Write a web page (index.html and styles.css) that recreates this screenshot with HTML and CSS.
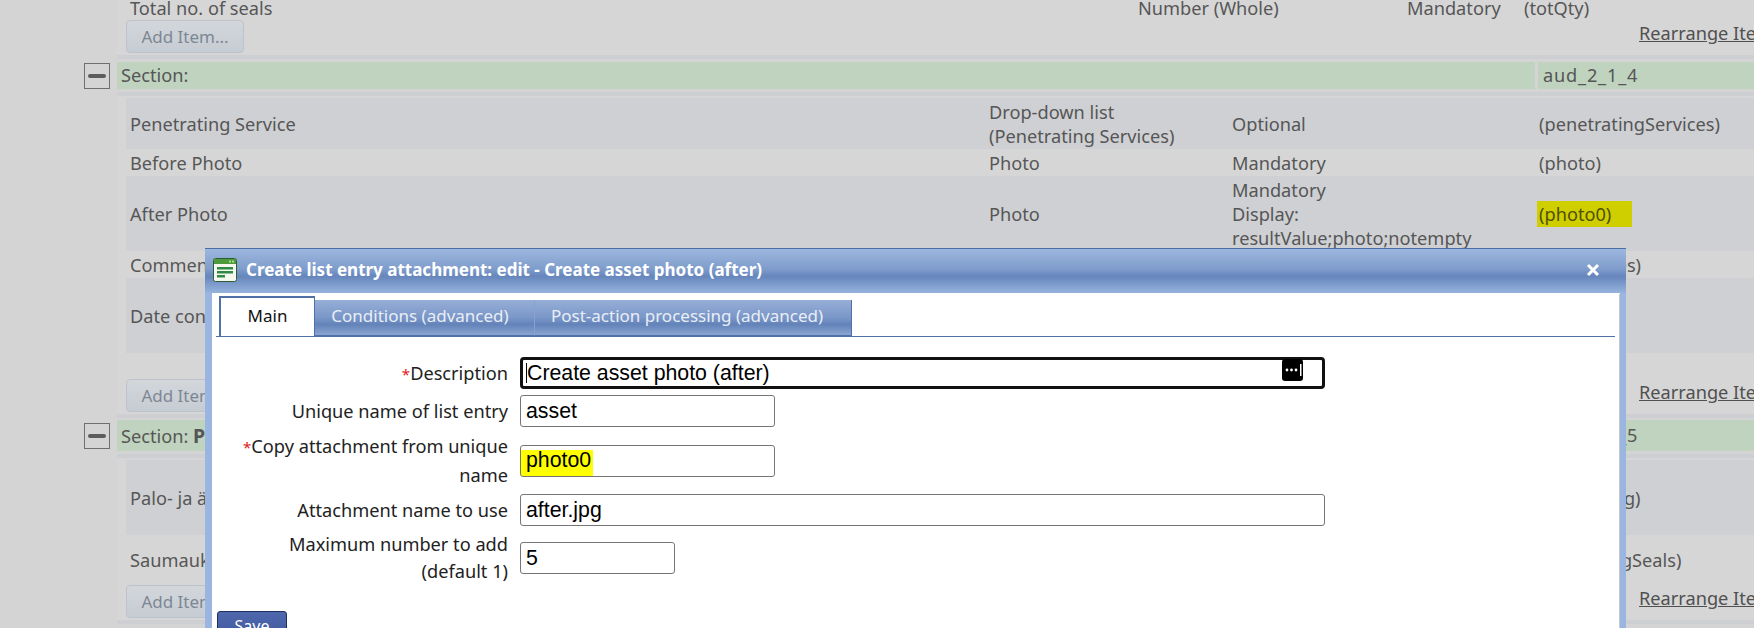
FILE: index.html
```html
<!DOCTYPE html>
<html>
<head>
  <title>Create list entry attachment</title>
  <link rel="stylesheet" href="styles.css">
</head>
<body>
  <div class="page">
    <div class="panel">
      <div class="row row-top">
        <span>Total no. of seals</span><span>Number (Whole)</span><span>Mandatory</span><span>(totQty)</span>
      </div>
      <div class="add-row add-top">
        <button class="add-btn">Add Item...</button>
        <a class="rearrange" href="#">Rearrange Items</a>
      </div>
    </div>

    <div class="section-head">
      <span class="toggle"></span>
      <div class="section-title">Section:</div>
      <div class="section-code">aud_2_1_4</div>
    </div>
    <div class="panel panel-rows">
      <div class="row dark h51">
        <span>Penetrating Service</span><span>Drop-down list<br>(Penetrating Services)</span><span>Optional</span><span>(penetratingServices)</span>
      </div>
      <div class="row h27">
        <span>Before Photo</span><span>Photo</span><span>Mandatory</span><span>(photo)</span>
      </div>
      <div class="row dark h75">
        <span>After Photo</span><span>Photo</span><span>Mandatory<br>Display:<br>resultValue;photo;notempty</span><span><span class="mark">(photo0)</span></span>
      </div>
      <div class="row h27">
        <span>Comments</span><span>Text</span><span>Optional</span><span>(afterNotes)</span>
      </div>
      <div class="row dark h75">
        <span>Date conducted</span><span>Date</span><span>Optional</span><span>(date)</span>
      </div>
      <div class="add-row add-second">
        <button class="add-btn">Add Item...</button>
        <a class="rearrange" href="#">Rearrange Items</a>
      </div>
    </div>

    <div class="section-head section-tall">
      <span class="toggle"></span>
      <div class="section-title">Section: <b>Palo- ja äänikatkot</b></div>
      <div class="section-code">aud_2_1_5</div>
    </div>
    <div class="panel panel-rows">
      <div class="row dark h75">
        <span>Palo- ja äänikatkot</span><span>Text</span><span>Optional</span><span>(fireSealing)</span>
      </div>
      <div class="row h50">
        <span>Saumaukset</span><span>Number</span><span>Optional</span><span>(remainingSeals)</span>
      </div>
      <div class="add-row">
        <button class="add-btn">Add Item...</button>
        <a class="rearrange" href="#">Rearrange Items</a>
      </div>
    </div>
  </div>

  <div class="dialog">
    <div class="dialog-title">
      <svg class="dialog-icon" width="24" height="24" viewBox="0 0 24 24">
        <rect x="0.5" y="0.5" width="23" height="23" rx="2" fill="#f4f8ee" stroke="#2f5d34"/>
        <rect x="1" y="1" width="22" height="5" fill="#4c9a3c"/>
        <rect x="16" y="2.5" width="2" height="2" fill="#a8d88e"/>
        <rect x="19" y="2.5" width="2" height="2" fill="#a8d88e"/>
        <rect x="4" y="9" width="16" height="2.5" fill="#2f8a45"/>
        <rect x="4" y="13" width="16" height="2.5" fill="#2f8a45"/>
        <rect x="4" y="17" width="8" height="2.5" fill="#2f8a45"/>
      </svg>
      <span class="dialog-name">Create list entry attachment: edit - Create asset photo (after)</span>
      <svg class="dialog-close" width="14" height="14" viewBox="0 0 14 14">
        <path d="M2 2L12 12M12 2L2 12" stroke="#fff" stroke-width="3"/>
      </svg>
    </div>
    <div class="dialog-body">
      <div class="tabs">
        <div class="tab tab-on">Main</div>
        <div class="tab tab-cond">Conditions (advanced)</div>
        <div class="tab tab-post">Post-action processing (advanced)</div>
      </div>
      <div class="form">
        <label class="flabel"><i>*</i>Description</label>
        <div class="focus-field">
          <input class="finput finput-focus" value="Create asset photo (after)">
          <span class="caret"></span>
          <svg class="pw-icon" width="21" height="22" viewBox="0 0 21 22">
            <rect width="21" height="22" rx="3" fill="#000"/>
            <circle cx="5" cy="11" r="1.4" fill="#fff"/>
            <circle cx="9.5" cy="11" r="1.4" fill="#fff"/>
            <circle cx="14" cy="11" r="1.4" fill="#fff"/>
            <rect x="18" y="5" width="1.5" height="12" fill="#fff"/>
          </svg>
        </div>

        <label class="flabel">Unique name of list entry</label>
        <input class="finput w255" value="asset">

        <label class="flabel flabel-copy"><i>*</i>Copy attachment from unique<br>name</label>
        <input class="finput w255 finput-mark" value="photo0">

        <label class="flabel">Attachment name to use</label>
        <input class="finput" value="after.jpg">

        <label class="flabel flabel-max">Maximum number to add<br>(default 1)</label>
        <input class="finput w155" value="5">
      </div>
      <button class="save-btn">Save</button>
    </div>
  </div>
</body>
</html>
```

FILE: styles.css
```css
html, body {
  margin: 0;
  height: 628px;
  overflow: hidden;
}
body {
  background-color: #d4d4d4;
  font-family: "Noto Sans", sans-serif;
  font-size: 18.2px;
  color: #565656;
  position: relative;
}
.page {
  padding-left: 117px;
}
.panel {
  background-color: #d6d6d6;
  padding: 0 0 0 9px;
  border-bottom: 4px solid #cecfd2;
  margin-bottom: 3px;
  height: 55px;
}
.panel-rows {
  border-top: 4px solid #cecfd2;
  margin-top: 3px;
  padding-top: 2px;
  height: auto;
  margin-bottom: 2px;
}
.row {
  display: grid;
  grid-template-columns: 859px 243px 307px 1fr;
  align-items: center;
  padding-left: 4px;
  line-height: 24px;
  white-space: nowrap;
}
.row-top {
  grid-template-columns: 1008px 269px 117px 1fr;
  height: 16px;
  line-height: 16px;
}
.dark {
  background-color: #cfd0d3;
}
.h27 { height: 27px; }
.h50 { height: 50px; }
.h51 { height: 51px; }
.h75 { height: 75px; }
.mark {
  display: inline-block;
  box-sizing: border-box;
  width: 95px;
  background-color: #cfcf00;
  color: #4f5000;
  margin-left: -2px;
  padding: 1px 0 1px 2px;
}
.add-row {
  display: flex;
  justify-content: space-between;
  height: 35px;
}
.add-top {
  margin-top: 4px;
}
.add-second {
  margin-top: 26px;
}
.add-btn {
  width: 118px;
  height: 33px;
  font-family: inherit;
  font-size: 17px;
  color: #7d8794;
  background: linear-gradient(#d3d7dc, #c6ccd3);
  border: 1px solid #bcc3cb;
  border-radius: 4px;
  padding: 0;
}
.rearrange {
  color: #505050;
  width: 115px;
  white-space: nowrap;
  line-height: 26px;
}
.section-head {
  display: flex;
  height: 27px;
  line-height: 27px;
  position: relative;
}
.section-tall {
  height: 31px;
  line-height: 31px;
}
.toggle {
  position: absolute;
  left: -33px;
  top: 1px;
  width: 24px;
  height: 24px;
  border: 1px solid #6f6f6f;
  display: flex;
  align-items: center;
  justify-content: center;
}
.section-tall .toggle {
  top: 3px;
}
.toggle::before {
  content: "";
  width: 18px;
  height: 4px;
  border-radius: 2px;
  background-color: #5c5c5c;
}
.section-title {
  width: 1418px;
  padding-left: 4px;
  box-sizing: border-box;
  background-color: #bfd3bf;
  white-space: nowrap;
  overflow: hidden;
}
.section-title b {
  font-size: 19.5px;
}
.section-code {
  flex: 1;
  margin-left: 3px;
  padding-left: 5px;
  letter-spacing: 0.8px;
  background-color: #bfd3bf;
}

/* dialog on top of the page */
.dialog {
  position: absolute;
  left: 205px;
  top: 248px;
  width: 1421px;
  height: 400px;
  box-sizing: border-box;
  border-top: 1px solid #4a6ea8;
  background-color: #9ab6e0;
  color: #222;
}
.dialog-title {
  height: 44px;
  box-sizing: border-box;
  display: flex;
  align-items: center;
  padding: 0 26px 2px 8px;
  background: linear-gradient(#9db7de, #7f9dcc 45%, #6686bc 62%, #97b3dd);
}
.dialog-icon {
  margin-right: 9px;
}
.dialog-name {
  flex: 1;
  font-size: 17px;
  font-weight: bold;
  color: #fff;
  margin-bottom: 2px;
}
.dialog-body {
  margin: 0 6px 0 7px;
  height: 355px;
  background-color: #fff;
  overflow: hidden;
  border-top: 1px solid #fff;
  box-shadow: inset -1px 0 0 #c8c8c8;
}
.tabs {
  display: flex;
  height: 40px;
  margin: 2px 5px 0 4px;
  border-bottom: 1px solid #4f71a6;
  align-items: flex-end;
  font-size: 17px;
}
.tab {
  height: 36px;
  line-height: 32px;
  text-align: center;
  box-sizing: border-box;
  color: #e9eef6;
  background: linear-gradient(#97aed7, #7a97c8 50%, #6383b9 70%, #8aa4d1);
  border-right: 1px solid #88a2cd;
  border-bottom: 1px solid #4f71a6;
}
.tab-on {
  width: 96px;
  height: 40px;
  line-height: 36px;
  margin-left: 3px;
  color: #111;
  background: #fff;
  border: 2px solid #4f71a6;
  border-bottom: 0;
  border-right-width: 1px;
}
.tab-cond { width: 220px; padding-right: 9px; }
.tab-post { width: 317px; padding-right: 12px; border-right-color: #4f71a6; }
.form {
  display: grid;
  grid-template-columns: 296px 1fr;
  column-gap: 12px;
  row-gap: 5px;
  align-items: center;
  margin-top: 20px;
  padding-right: 295px;
}
.flabel {
  text-align: right;
  line-height: 24px;
  color: #222;
}
.flabel i {
  color: #e02020;
  font-style: normal;
  font-size: 15px;
}
.flabel-copy { line-height: 28px; }
.flabel-max { line-height: 27px; }
.finput {
  box-sizing: border-box;
  width: 100%;
  height: 32px;
  border: 1px solid #767676;
  border-radius: 3px;
  padding: 0 5px;
  font-family: "Liberation Sans", sans-serif;
  font-size: 21.3px;
  color: #000;
  background-color: #fff;
  outline: none;
}
.w255 { width: 255px; }
.w155 { width: 155px; }
.finput-mark {
  background: linear-gradient(#ffff00, #ffff00) no-repeat 0 100% / 72px 26px;
}
.focus-field {
  display: flex;
  align-items: center;
  position: relative;
  margin-bottom: 1px;
}
.finput-focus {
  border: 3px solid #111;
  border-radius: 4px;
  padding: 0 4px;
}
.caret {
  position: absolute;
  left: 6px;
  top: 6px;
  width: 1px;
  height: 20px;
  background-color: #000;
}
.pw-icon {
  position: absolute;
  right: 22px;
  top: 2px;
}
.save-btn {
  display: block;
  margin: 26px 0 0 5px;
  width: 70px;
  height: 34px;
  padding: 0 0 4px;
  font-family: inherit;
  font-size: 16px;
  color: #fff;
  background: linear-gradient(#4f68ad, #3f5599);
  border: 1px solid #1f2f5f;
  border-radius: 3px;
}
```
